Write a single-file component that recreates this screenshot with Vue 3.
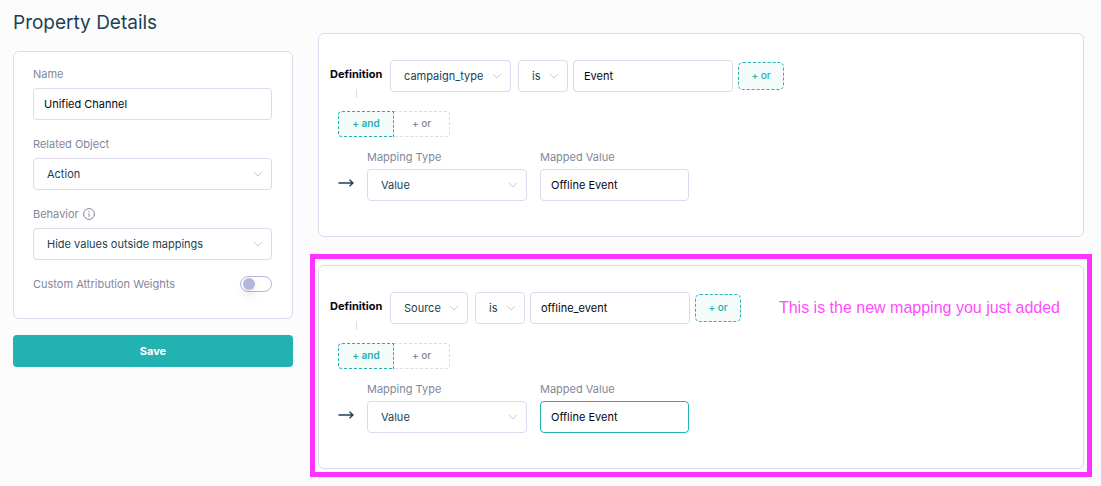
<script setup>
import { reactive, ref } from 'vue'

const details = reactive({
  name: 'Unified Channel',
  object: 'Action',
  behavior: 'Hide values outside mappings',
  weights: false,
})

const mappings = ref([
  { id: 1, field: 'campaign_type', operator: 'is', value: 'Event', type: 'Value', mapped: 'Offline Event' },
  {
    id: 2, field: 'Source', operator: 'is', value: 'offline_event', type: 'Value', mapped: 'Offline Event',
    active: true, note: 'This is the new mapping you just added',
  },
])
</script>

<template>
  <div class="page">
    <aside class="sidebar">
      <h1>Property Details</h1>
      <form class="card details" @submit.prevent>
        <div class="field">
          <label for="name">Name</label>
          <input id="name" v-model="details.name" class="box" type="text">
        </div>
        <div class="field">
          <label for="object">Related Object</label>
          <div class="select">
            <select id="object" v-model="details.object" class="box"><option>Action</option></select>
            <svg viewBox="0 0 10 6"><path d="M1 1l4 4 4-4" /></svg>
          </div>
        </div>
        <div class="field">
          <label for="behavior">Behavior
            <svg class="info" viewBox="0 0 12 12"><circle cx="6" cy="6" r="5.4" /><path d="M6 5.3v3.5M6 3v1.2" /></svg>
          </label>
          <div class="select">
            <select id="behavior" v-model="details.behavior" class="box"><option>Hide values outside mappings</option></select>
            <svg viewBox="0 0 10 6"><path d="M1 1l4 4 4-4" /></svg>
          </div>
        </div>
        <div class="toggle-row">
          <label for="weights">Custom Attribution Weights</label>
          <input id="weights" v-model="details.weights" class="toggle" type="checkbox">
        </div>
      </form>
      <button class="save" type="button">Save</button>
    </aside>

    <main class="mappings">
      <div v-for="m in mappings" :key="m.id" class="mapping">
        <section class="card rule-card">
          <div class="rule">
            <div class="definition"><span>Definition</span><i class="stem"></i></div>
            <div class="controls">
              <div class="selects">
                <div class="select">
                  <select v-model="m.field" class="box" aria-label="Field"><option>{{ m.field }}</option></select>
                  <svg viewBox="0 0 10 6"><path d="M1 1l4 4 4-4" /></svg>
                </div>
                <div class="select">
                  <select v-model="m.operator" class="box" aria-label="Operator"><option>is</option></select>
                  <svg viewBox="0 0 10 6"><path d="M1 1l4 4 4-4" /></svg>
                </div>
              </div>
              <input v-model="m.value" class="box match" type="text" aria-label="Match value">
              <button class="dashed add-or" type="button">+ or</button>
            </div>
            <p v-if="m.note" class="note">{{ m.note }}</p>
          </div>
          <div class="joiners">
            <button class="dashed and" type="button">+ and</button>
            <button class="dashed or" type="button">+ or</button>
          </div>
          <div class="result">
            <svg class="arrow" viewBox="0 0 16 10"><path d="M0.5 5h14.5M11.5 1.7l3.5 3.3-3.5 3.3" /></svg>
            <div class="field type">
              <label :for="'type' + m.id">Mapping Type</label>
              <div class="select">
                <select :id="'type' + m.id" v-model="m.type" class="box"><option>Value</option></select>
                <svg viewBox="0 0 10 6"><path d="M1 1l4 4 4-4" /></svg>
              </div>
            </div>
            <div class="field mapped">
              <label :for="'mapped' + m.id">Mapped Value</label>
              <input :id="'mapped' + m.id" v-model="m.mapped" class="box" :class="{ active: m.active }" type="text">
            </div>
          </div>
        </section>
        <div v-if="m.note" class="highlight"></div>
      </div>
    </main>
  </div>
</template>

<style>
body { margin: 0; background: #fcfcfc; }
</style>

<style scoped>
.page, .page * { box-sizing: border-box; }
.page {
  display: flex;
  align-items: flex-start;
  gap: 25px;
  padding: 10px 17px 8px 13px;
  font: 11px/20px Inter, "Liberation Sans", sans-serif;
  color: #1a4254;
}
.sidebar { width: 280px; flex: none; }
h1 { margin: 0 0 15px; font-size: 19px; line-height: 26px; font-weight: 400; }
.card { background: #fff; border: 1px solid #dcdaec; border-radius: 6px; }
.details {
  display: flex;
  flex-direction: column;
  gap: 14px;
  padding: 12px 20px 24px 19px;
}
.field { display: flex; flex-direction: column; gap: 4px; }
label { display: flex; align-items: center; color: #848799; }
.box {
  display: block;
  width: 100%;
  height: 32px;
  margin: 0;
  border: 1px solid #dcdaec;
  border-radius: 4px;
  background: #fff;
  padding: 0 10px;
  font: inherit;
  color: #05070f;
  outline: none;
}
select.box { appearance: none; padding: 0 26px 0 13px; color: #1a4254; }
.box.active { border-color: #22b2b2; }
.select { position: relative; }
.select svg {
  position: absolute;
  right: 9px;
  top: 13px;
  width: 10px;
  height: 6px;
  pointer-events: none;
}
svg { fill: none; stroke: #c9c9d2; stroke-width: 1; }
.info { width: 12px; height: 12px; margin-left: 4px; stroke: #848799; }
.toggle-row { display: flex; align-items: center; justify-content: space-between; }
.toggle {
  appearance: none;
  display: flex;
  align-items: center;
  width: 32px;
  height: 16px;
  margin: 0;
  padding: 0 2px;
  border: 1px solid #b3b5dc;
  border-radius: 8px;
  background: #fff;
}
.toggle::before {
  content: "";
  width: 12px;
  height: 12px;
  border-radius: 50%;
  background: #b3b5dc;
  box-shadow: 0 6px 10px rgba(0, 0, 0, 0.1);
}
.toggle:checked { justify-content: flex-end; }
button { font-family: inherit; margin: 0; padding: 0; cursor: pointer; }
.save {
  width: 100%;
  height: 32px;
  margin-top: 16px;
  border: 0;
  border-radius: 4px;
  background: #22b2b2;
  color: #fff;
  font-size: 11px;
  font-weight: 700;
}
.mappings {
  flex: 1;
  min-width: 0;
  display: flex;
  flex-direction: column;
  gap: 28px;
  padding-top: 23px;
}
.mapping { position: relative; }
.highlight {
  position: absolute;
  inset: -11px -8px -8px;
  border: 5px solid #ff33ff;
  pointer-events: none;
}
.rule-card { padding: 26px 23px 35px 11px; }
.rule { display: flex; align-items: flex-start; }
.definition {
  width: 60px;
  display: flex;
  flex-direction: column;
  align-items: flex-start;
  line-height: 29px;
  font-weight: 700;
  color: #05070f;
}
.stem { width: 1px; height: 9px; margin-left: 26px; background: #dcdaec; }
.controls { display: flex; align-items: center; gap: 5px; }
.selects { display: flex; gap: 7px; }
.match { width: 160px; }
.dashed {
  height: 26px;
  padding-bottom: 2px;
  border: 1px dashed #dcdaec;
  background: #fff;
  color: #848799;
  font-size: 10px;
  font-weight: 500;
}
.add-or, .and { border-color: #22b2b2; background: #f3fbfb; color: #22b2b2; }
.and { font-weight: 600; }
.add-or { width: 46px; height: 28px; border-radius: 5px; }
.note {
  margin: 6px 0 0 auto;
  font: 16px/20px "Liberation Sans", Arial, sans-serif;
  color: #ff4dff;
}
.joiners { display: flex; margin: 13px 0 11px 8px; }
.and, .or { width: 56px; }
.and { border-radius: 4px 0 0 4px; }
.or { border-left: 0; border-radius: 0 4px 4px 0; }
.result { display: flex; align-items: flex-end; gap: 13px; margin-left: 8px; }
.result .field { gap: 2px; }
.result label { line-height: 19px; }
.arrow { width: 16px; height: 10px; margin-bottom: 13px; stroke: #1a4254; stroke-width: 1.3; }
.type { width: 160px; }
.mapped { width: 149px; }
</style>
